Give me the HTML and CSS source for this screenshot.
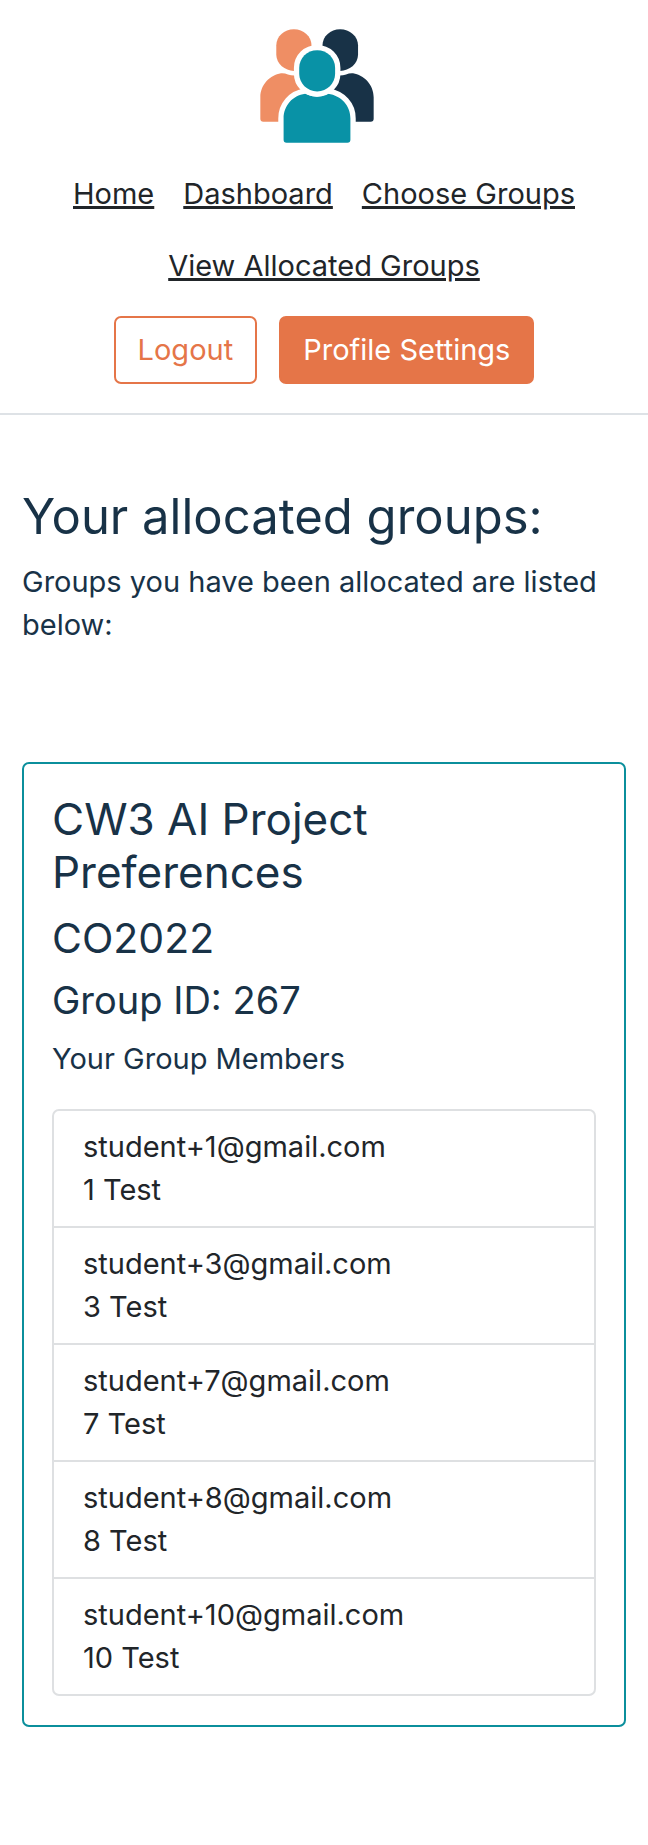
FILE: index.html
```html
<!DOCTYPE html>
<html lang="en">
<head>
<meta charset="utf-8">
<meta name="viewport" content="width=device-width, initial-scale=1">
<title>Allocated Groups</title>
<link rel="stylesheet" href="styles.css">
</head>
<body>
<header class="site-header">
  <a class="brand" href="#" aria-label="Home page">
    <svg class="logo" viewBox="59 55 343 343" aria-hidden="true">
      <g fill="#ef8e64">
        <path d="M108 105C108 77 132 56 161 56S214 77 214 105V132C214 160 188 181 161 181S108 160 108 132Z"/>
        <path d="M60 260C60 222 90 193 122 188Q133 187 143 192Q160 198 178 193L220 240V334H69Q60 334 60 325Z"/>
      </g>
      <g fill="#183247">
        <path d="M247 105C247 77 271 56 300 56S354 77 354 105V132C354 160 328 181 300 181S247 160 247 132Z"/>
        <path d="M401 260C401 222 371 193 339 188Q328 187 318 192Q301 198 283 193L240 240V334H392Q401 334 401 325Z"/>
      </g>
      <g fill="#0992a6" stroke="#fff" stroke-width="32" paint-order="stroke">
        <path d="M130 324C130 286 157 255 195 250Q230 267 264 250C304 256 331 286 331 324V388Q331 397 322 397H139Q130 397 130 388Z"/>
        <path d="M177 172C177 142 201 119 231 119S285 142 285 172V190C285 219 261 243 231 243S177 219 177 190Z"/>
      </g>
    </svg>
  </a>
  <nav class="nav">
    <a class="nav-link" href="#">Home</a>
    <a class="nav-link" href="#">Dashboard</a>
    <a class="nav-link" href="#">Choose Groups</a>
    <a class="nav-link" href="#">View Allocated Groups</a>
  </nav>
  <div class="actions">
    <button class="btn btn-outline" type="button">Logout</button>
    <button class="btn btn-solid" type="button">Profile Settings</button>
  </div>
</header>
<main class="content">
  <h1 class="title">Your allocated groups:</h1>
  <p class="intro">Groups you have been allocated are listed below:</p>
  <section class="card">
    <h2 class="card-title">CW3 AI Project Preferences</h2>
    <h3 class="card-module">CO2022</h3>
    <h4 class="card-group">Group ID: 267</h4>
    <p class="card-label">Your Group Members</p>
    <ul class="members">
      <li class="member">student+1@gmail.com<br>1 Test</li>
      <li class="member">student+3@gmail.com<br>3 Test</li>
      <li class="member">student+7@gmail.com<br>7 Test</li>
      <li class="member">student+8@gmail.com<br>8 Test</li>
      <li class="member">student+10@gmail.com<br>10 Test</li>
    </ul>
  </section>
</main>
</body>
</html>
```
FILE: styles.css
```css
*, *::before, *::after { box-sizing: border-box; }

body {
  margin: 0;
  background: #fff;
  color: #212529;
  font-family: Inter, "Liberation Sans", sans-serif;
  font-size: 29px;
  font-weight: 400;
  line-height: 43px;
}

h1, h2, h3, h4, p, ul { margin: 0; padding: 0; font-weight: inherit; }

.site-header {
  display: flex;
  flex-direction: column;
  align-items: center;
  padding: 29px 22px;
  border-bottom: 2px solid #dee2e6;
}

.brand { display: block; padding-right: 14px; }
.logo { display: block; width: 114px; height: 114px; }

.nav {
  display: flex;
  flex-wrap: wrap;
  justify-content: center;
  gap: 29px;
  margin-top: 29px;
}

.nav-link {
  color: #212529;
  text-decoration: underline;
  text-decoration-thickness: 3px;
}

.actions {
  display: flex;
  gap: 22px;
  margin-top: 29px;
}

.btn {
  padding: 10px 22px 11px;
  border: 2px solid #e57548;
  border-radius: 7px;
  font: inherit;
}

.btn-outline { background: #fff; color: #e57548; }
.btn-solid { background: #e57548; color: #fff; }

.content {
  padding: 72px 22px 118px;
  color: #183247;
}

.title {
  margin-bottom: 14px;
  font-size: 49px;
  line-height: 59px;
}

.intro { margin-bottom: 116px; }

.card {
  padding: 29px 28px;
  border: 2px solid #0b8f9c;
  border-radius: 7px;
}

.card-title {
  max-width: 400px;
  margin-bottom: 14px;
  font-size: 44px;
  line-height: 53px;
}

.card-module {
  margin-bottom: 14px;
  font-size: 41px;
  line-height: 50px;
}

.card-group {
  margin-bottom: 14px;
  font-size: 38px;
  line-height: 46px;
}

.card-label { margin-bottom: 29px; }

.members {
  border: 2px solid #dee0e2;
  border-radius: 7px;
  color: #212529;
  list-style: none;
}

.member { padding: 14px 29px 15px; }
.member + .member { border-top: 2px solid #dee0e2; }
```
